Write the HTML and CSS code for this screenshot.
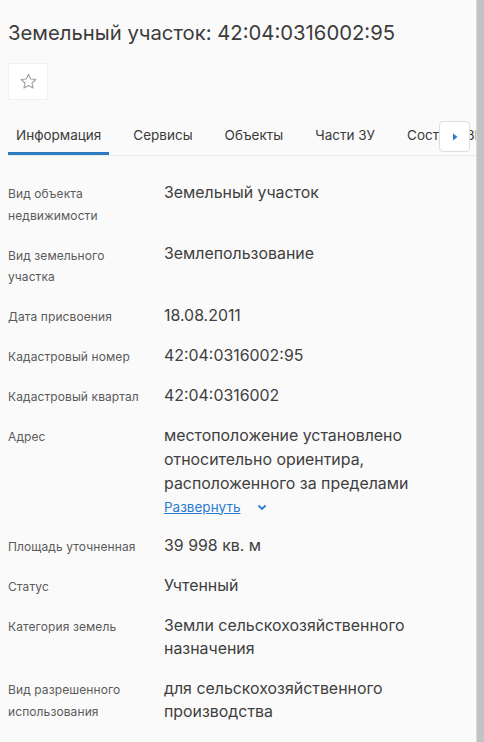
FILE: index.html
```html
<!DOCTYPE html>
<html lang="ru">
<head>
  <meta charset="UTF-8">
  <title>Земельный участок</title>
  <link rel="stylesheet" href="styles.css">
</head>
<body>

  <div class="layout">
    <div class="panel">
      <h1 class="title">Земельный участок: 42:04:0316002:95</h1>

      <button class="fav-btn" type="button" aria-label="В избранное">
        <svg width="19" height="19" viewBox="0 0 24 24" fill="none" stroke="#a0a0a0" stroke-width="1.4" stroke-linejoin="round">
          <path d="M12 2.8l2.8 6 6.5.7-4.9 4.4 1.4 6.4L12 17l-5.8 3.3 1.4-6.4-4.9-4.4 6.5-.7z"/>
        </svg>
      </button>

      <div class="tabs">
        <div class="tabs-strip">
          <span class="tab active">Информация</span>
          <span class="tab">Сервисы</span>
          <span class="tab">Объекты</span>
          <span class="tab">Части ЗУ</span>
          <span class="tab">Состав ЕЗП</span>
        </div>
        <button class="tabs-next" type="button" aria-label="Далее">
          <svg width="6" height="8" viewBox="0 0 6 8"><path d="M1 0.5L5.5 4 1 7.5z" fill="#2c7bc4"/></svg>
        </button>
      </div>

      <div class="info">
        <div class="row">
          <div class="label">Вид объекта недвижимости</div>
          <div class="value">Земельный участок</div>
        </div>
        <div class="row">
          <div class="label">Вид земельного участка</div>
          <div class="value">Землепользование</div>
        </div>
        <div class="row">
          <div class="label">Дата присвоения</div>
          <div class="value">18.08.2011</div>
        </div>
        <div class="row">
          <div class="label">Кадастровый номер</div>
          <div class="value">42:04:0316002:95</div>
        </div>
        <div class="row">
          <div class="label">Кадастровый квартал</div>
          <div class="value">42:04:0316002</div>
        </div>
        <div class="row">
          <div class="label">Адрес</div>
          <div class="value">
            <div class="clamp">местоположение установлено относительно ориентира, расположенного за пределами</div>
            <div class="more-line">
              <a class="more" href="#">Развернуть</a>
              <svg class="chev" width="10" height="7" viewBox="0 0 10 7"><path d="M1.5 1.5L5 5l3.5-3.5" fill="none" stroke="#2a7ad0" stroke-width="1.8"/></svg>
            </div>
          </div>
        </div>
        <div class="row">
          <div class="label">Площадь уточненная</div>
          <div class="value">39 998 кв. м</div>
        </div>
        <div class="row">
          <div class="label">Статус</div>
          <div class="value">Учтенный</div>
        </div>
        <div class="row">
          <div class="label">Категория земель</div>
          <div class="value">Земли сельскохозяйственного назначения</div>
        </div>
        <div class="row">
          <div class="label">Вид разрешенного использования</div>
          <div class="value">для сельскохозяйственного производства</div>
        </div>
      </div>
    </div>
    <div class="gutter"></div>
  </div>

</body>
</html>
```

FILE: styles.css
```css
html, body {
  margin: 0;
  height: 100%;
  background: #fafafa;
  font-family: "Inter", "Noto Sans", sans-serif;
  color: #333;
}

.layout {
  display: flex;
  height: 100%;
  overflow: hidden;
}

.panel {
  flex: 1;
  min-width: 0;
  padding-left: 8px;
}

.gutter {
  width: 7px;
  background: #c2c1c3;
  border-left: 1px solid #d9d8da;
}

.title {
  margin: 0;
  padding-top: 21px;
  font-size: 20.3px;
  line-height: 24px;
  font-weight: 400;
  color: #3c3c3c;
}

.fav-btn {
  display: flex;
  align-items: center;
  justify-content: center;
  width: 40px;
  height: 37px;
  margin-top: 18px;
  padding: 0;
  background: #fff;
  border: 1px solid #f0f0f0;
  border-radius: 2px;
}

.tabs {
  position: relative;
  margin-top: 10px;
  border-bottom: 1px solid #ebebeb;
}

.tabs-strip {
  display: flex;
  gap: 16px;
  overflow: hidden;
  white-space: nowrap;
}

.tab {
  padding: 15px 8px 7px;
  font-size: 13.5px;
  line-height: 20px;
  color: #3a3a3a;
  border-bottom: 3px solid transparent;
}

.tab.active {
  border-bottom-color: #2d7cc1;
}

.tabs-next {
  position: absolute;
  top: 11px;
  right: 6px;
  width: 31px;
  height: 31px;
  display: flex;
  align-items: center;
  justify-content: center;
  padding: 0;
  background: #fff;
  border: 1px solid #dedede;
  border-radius: 4px;
}

.info {
  padding-top: 18px;
}

.row {
  display: flex;
  gap: 20px;
  padding: 9px 0 9.5px;
}

.label {
  width: 136px;
  flex-shrink: 0;
  font-size: 12px;
  line-height: 21.5px;
  letter-spacing: 0.1px;
  color: #5a5a5a;
}

.value {
  flex: 1;
  margin-top: -2.5px;
  padding-right: 12px;
  font-size: 15.9px;
  line-height: 23.5px;
  color: #404040;
}

.clamp {
  line-height: 24px;
}

.more-line {
  line-height: 22px;
}

.more {
  font-size: 13.5px;
  color: #2a7ad0;
  text-decoration: underline;
}

.chev {
  margin-left: 12px;
  vertical-align: 1px;
}
```
